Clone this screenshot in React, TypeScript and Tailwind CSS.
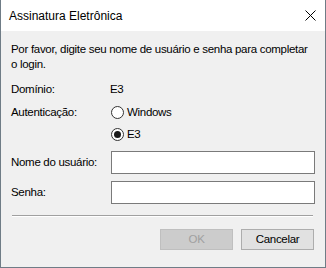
import React from "react";

const font = { fontFamily: "'Segoe UI', 'Liberation Sans', Arial, sans-serif" };

function Radio({ checked }: { checked?: boolean }) {
  return (
    <span className="w-[13px] h-[13px] rounded-full border border-[#333333] bg-white flex items-center justify-center shrink-0">
      {checked && <span className="w-[7px] h-[7px] rounded-full bg-[#1a1a1a]" />}
    </span>
  );
}

export default function App() {
  return (
    <div
      className="w-[326px] h-[268px] bg-[#f0f0f0] border-x border-b border-[#6f7c86] flex flex-col text-black whitespace-nowrap"
      style={font}
    >
      <div className="h-[31px] bg-white flex items-center justify-between pl-[8px] pr-[9px] shrink-0">
        <span className="text-[12px]">Assinatura Eletrônica</span>
        <svg width="11" height="11" viewBox="0 0 11 11">
          <path d="M0.5 0.5 L10.5 10.5 M10.5 0.5 L0.5 10.5" stroke="#000" strokeWidth="1" />
        </svg>
      </div>
      <div className="flex flex-col px-[10px] pt-[11px] text-[11.5px] leading-[15px] tracking-[-0.3px]">
        <p className="w-[304px] whitespace-normal">Por favor, digite seu nome de usuário e senha para completar o login.</p>
        <div className="flex items-center mt-[10px] h-[15px]">
          <span className="w-[99px]">Domínio:</span>
          <span>E3</span>
        </div>
        <div className="flex items-center mt-[8px] h-[15px]">
          <span className="w-[100px]">Autenticação:</span>
          <span className="flex items-center gap-[3px]"><Radio />Windows</span>
        </div>
        <div className="flex items-center mt-[7px] h-[15px]">
          <span className="w-[100px]" />
          <span className="flex items-center gap-[3px]"><Radio checked />E3</span>
        </div>
        <div className="flex items-center mt-[9px]">
          <span className="w-[100px]">Nome do usuário:</span>
          <div className="w-[204px] h-[23px] bg-white border border-[#7a7a7a]" />
        </div>
        <div className="flex items-center mt-[7px]">
          <span className="w-[100px]">Senha:</span>
          <div className="w-[204px] h-[23px] bg-white border border-[#7a7a7a]" />
        </div>
        <div className="mt-[11px] ml-[1px] w-[301px] h-[2px] border-t border-[#a0a0a0] border-b border-b-white" />
        <div className="flex justify-end gap-[8px] mt-[12px] pr-[1px]">
          <div className="w-[73px] h-[21px] bg-[#cccccc] border border-[#bfbfbf] flex items-center justify-center text-[#a0a0a0]">OK</div>
          <div className="w-[73px] h-[21px] bg-[#e1e1e1] border border-[#adadad] flex items-center justify-center">Cancelar</div>
        </div>
      </div>
    </div>
  );
}
